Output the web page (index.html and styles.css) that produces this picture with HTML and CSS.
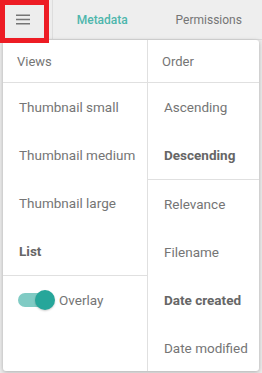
FILE: index.html
```html
<!DOCTYPE html>
<html>
<head>
<meta charset="utf-8">
<link rel="stylesheet" href="styles.css">
</head>
<body>
<div class="page">
  <header class="topbar">
    <div class="menu-btn">
      <svg width="14" height="11" viewBox="0 0 14 11"><path d="M0 1.25H14M0 5.5H14M0 9.75H14" stroke="#757575" stroke-width="1.5"/></svg>
    </div>
    <div class="tab tab-active">Metadata</div>
    <div class="tab">Permissions</div>
  </header>
  <div class="highlight"></div>
  <div class="dropdown">
    <div class="col col-left">
      <div class="col-head">Views</div>
      <div class="item">Thumbnail small</div>
      <div class="item">Thumbnail medium</div>
      <div class="item">Thumbnail large</div>
      <div class="item bold">List</div>
      <div class="sep"></div>
      <div class="item toggle-row">
        <span class="toggle"><span class="track"></span><span class="thumb"></span></span>
        <span>Overlay</span>
      </div>
    </div>
    <div class="col col-right">
      <div class="col-head">Order</div>
      <div class="item">Ascending</div>
      <div class="item bold">Descending</div>
      <div class="sep"></div>
      <div class="item">Relevance</div>
      <div class="item">Filename</div>
      <div class="item bold">Date created</div>
      <div class="item">Date modified</div>
    </div>
  </div>
</div>
</body>
</html>
```

FILE: styles.css
```css
* { box-sizing: border-box; }
html, body { margin: 0; padding: 0; }
body {
  font-family: Roboto, "Liberation Sans", sans-serif;
  background: #ececec;
  width: 262px;
  height: 373px;
  overflow: hidden;
}
.page {
  position: relative;
  width: 262px;
  height: 373px;
  background: #ececec;
}
.topbar {
  display: flex;
  height: 40px;
  background: #eeeeee;
  border-bottom: 1px solid #dcdcdc;
}
.menu-btn {
  width: 53px;
  display: flex;
  align-items: center;
  padding-left: 16px;
  border-right: 1px solid #dddddd;
  background: #ededed;
}
.tab {
  flex: 1;
  display: flex;
  align-items: center;
  justify-content: center;
  padding-top: 1px;
  font-size: 12px;
  color: #757575;
}
.tab-active {
  color: #4db6ac;
  font-weight: 500;
  margin-left: -4px;
}
.highlight {
  position: absolute;
  left: 0;
  top: 0;
  width: 49px;
  height: 43px;
  border: 5px solid #ed1c24;
  z-index: 3;
}
.dropdown {
  position: absolute;
  left: 3px;
  top: 40px;
  width: 256px;
  height: 331px;
  background: #fff;
  border-radius: 3px;
  box-shadow: 0 1px 4px rgba(0,0,0,0.28);
  display: grid;
  grid-template-columns: 144px 1fr;
  overflow: hidden;
  z-index: 2;
}
.col-right { border-left: 1px solid #e0e0e0; }
.col-head {
  height: 43px;
  border-bottom: 1px solid #e0e0e0;
  display: flex;
  align-items: center;
  padding-left: 14px;
  font-size: 13px;
  color: #757575;
}
.item {
  height: 48px;
  display: flex;
  align-items: center;
  padding-left: 16px;
  font-size: 13.5px;
  color: #757575;
}
.item.bold {
  font-weight: 700;
  color: #666666;
}
.sep {
  height: 1px;
  background: #e0e0e0;
}
.toggle-row { padding-left: 15px; gap: 4px; }
.toggle {
  position: relative;
  width: 37px;
  height: 20px;
  display: inline-block;
}
.track {
  position: absolute;
  left: 0;
  top: 3px;
  width: 30px;
  height: 14px;
  border-radius: 7px;
  background: #80cbc4;
}
.thumb {
  position: absolute;
  left: 17px;
  top: 0;
  width: 20px;
  height: 20px;
  border-radius: 50%;
  background: #26a69a;
  box-shadow: 0 1px 2px rgba(0,0,0,0.2);
}
```
